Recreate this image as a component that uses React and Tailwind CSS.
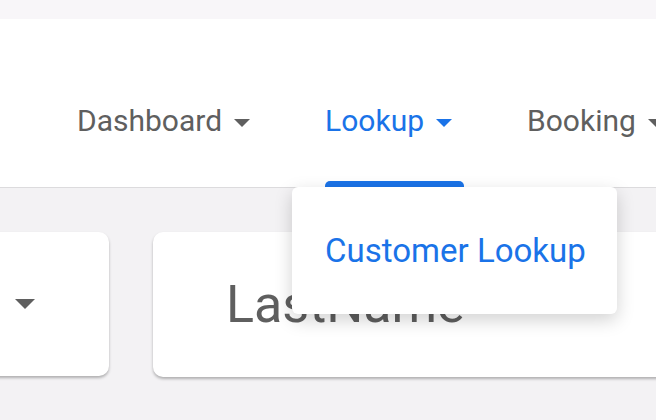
import React from 'react';

const Caret = ({ className }) => (
  <svg viewBox="0 0 16 8" className={className} fill="currentColor">
    <polygon points="0,0 16,0 8,8" />
  </svg>
);

const navItems = [
  { label: 'Dashboard', active: false },
  { label: 'Lookup', active: true },
  { label: 'Booking', active: false },
];

export default function App() {
  return (
    <div className="w-[656px] h-[420px] overflow-hidden bg-[#f3f2f4] relative" style={{ fontFamily: 'Roboto, "Liberation Sans", sans-serif' }}>
      <div className="h-[19px] bg-[#f8f6f9]" />
      <header className="h-[169px] bg-white border-b border-[#dcdbdd] flex items-end">
        <nav className="flex gap-[63px] pl-[77px] h-[122px] items-stretch">
          {navItems.map((item) => (
            <div key={item.label} className="relative flex items-start pt-[39px] pr-3 shrink-0">
              <div className={`flex items-center h-[34px] text-[30px] leading-none ${item.active ? 'text-[#1a73e8]' : 'text-[#5f5f5f]'}`}>
                <span>{item.label}</span>
                <Caret className="w-4 h-2 ml-3 mt-1" />
              </div>
              {item.active && (
                <div className="absolute left-0 right-0 bottom-0 h-[6px] rounded-t-[5px] bg-[#1a73e8]" />
              )}
              {item.active && (
                <div className="absolute left-[-33px] top-[122px] w-[325px] h-[127px] bg-white rounded-md shadow-[0_6px_18px_rgba(0,0,0,0.18)] z-10 flex items-center pl-[33px]">
                  <span className="text-[33px] text-[#1a73e8] leading-none">Customer Lookup</span>
                </div>
              )}
            </div>
          ))}
        </nav>
      </header>
      <main className="flex gap-[44px] pt-[44px] ml-[-91px]">
        <div className="w-[200px] h-[144px] shrink-0 bg-white rounded-[10px] shadow-[0_2px_3px_rgba(0,0,0,0.28)] flex items-center justify-end pr-[74px]">
          <Caret className="w-5 h-[10px] text-[#5f5f5f]" />
        </div>
        <div className="w-[600px] h-[145px] shrink-0 bg-white rounded-[10px] shadow-[0_2px_3px_rgba(0,0,0,0.28)] flex items-center pl-[73px]">
          <span className="text-[52px] text-[#5f5f5f] leading-none">LastName</span>
        </div>
      </main>
    </div>
  );
}
